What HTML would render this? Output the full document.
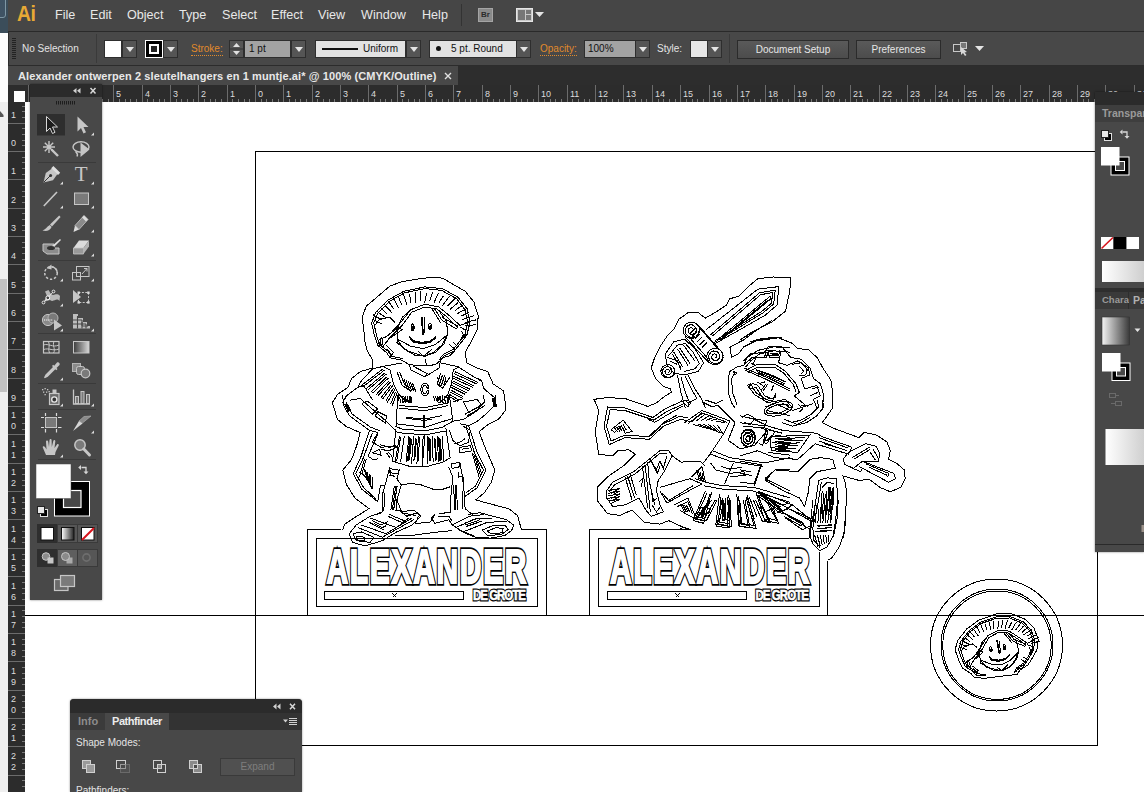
<!DOCTYPE html><html><head><meta charset="utf-8"><title>Illustrator</title><style>*{box-sizing:border-box;margin:0;padding:0}
html,body{width:1144px;height:792px;overflow:hidden;background:#fff;font-family:"Liberation Sans","DejaVu Sans",sans-serif;font-size:11px;color:#e6e6e6}
.abs{position:absolute}
#leftstrip{left:0;top:0;width:8px;height:792px;background:#efefef}
#leftstrip .blue{left:0;top:0;width:8px;height:33px;background:#3b4d5a}
#leftstrip .wht{left:0;top:33px;width:8px;height:69px;background:#fdfdfd}
#menubar{left:8px;top:0;width:1136px;height:31px;background:#464646}
#menubar span{position:absolute;top:8px;font-size:12.6px;color:#e8e8e8;line-height:15px;white-space:nowrap}
#ctrl{left:8px;top:31px;width:1136px;height:35px;background:#484848;border-top:1px solid #2a2a2a;border-bottom:1px solid #2c2c2c;border-left:1px solid #2c2c2c}
#tabbar{left:8px;top:66px;width:1136px;height:19px;background:#2d2d2d}
#tab{left:8px;top:66px;width:450px;height:20px;background:#484848}
#tab b{position:absolute;left:10px;top:4px;font-size:11px;color:#e8e8e8;white-space:nowrap;letter-spacing:0.1px}
#hruler{left:8px;top:85px;width:1136px;height:17px;background:#2c2c2c}
#vruler{left:8px;top:85px;width:17px;height:707px;background:#2c2c2c}
.lbl{color:#e4e4e4;font-size:10px;white-space:nowrap;position:absolute;line-height:13px}
.orange{color:#e08a2b;border-bottom:1px dotted #e08a2b}
.dd{position:absolute;background:#555;border:1px solid #2e2e2e;}
.dd:after{content:"";position:absolute;left:50%;top:50%;margin:-2px 0 0 -4px;border:4px solid transparent;border-top:5px solid #e4e4e4;border-bottom:0}
.btn{position:absolute;background:linear-gradient(#5a5a5a,#4c4c4c);border:1px solid #2b2b2b;color:#e6e6e6;text-align:center;font-size:10px;line-height:17px}
.panel{position:absolute;background:#484848}
.phead{position:absolute;background:#2b2b2b}
</style></head><body><svg class="abs" style="left:0;top:0" width="1144" height="792" viewBox="0 0 1144 792">
<g fill="none" stroke="#000" stroke-width="1" shape-rendering="crispEdges">
<rect x="255.500" y="151.500" width="842" height="594"/>
<path d="M25 615.500H1144"/>
<path d="M307.5 615.5V529.5H341 M521.5 529.5H546.5V615.5 M316.5 538.5H537.5V606.5H316.5Z M324.5 591.5H463.5V599.5H324.5Z M392.5 593.5L396.5 597.5M396.5 593.5L392.5 597.5"/><path d="M589.5 615.5V529.5H691 M827.5 560.5V615.5 M808.5 538.5H598.5V606.5H819.5V551.5 M607.5 591.5H746.5V599.5H607.5Z M675.5 593.5L679.5 597.5M679.5 593.5L675.5 597.5"/>
<path d="M431.9 277.2 L417.9 279.0 L402.2 281.6 L389.9 286.0 L377.7 296.5 L366.3 306.1 L362.0 317.4 L363.7 327.9 L364.6 340.2 L367.2 350.7 L372.4 359.4 L372.4 368.1 L360.2 371.6 L351.5 378.6 L348.0 387.4 L337.5 394.4 L332.2 402.9 L332.2 402.0 L337.5 419.5 L346.2 426.5 L360.2 432.6 L356.7 445.7 L351.5 459.7 L342.7 470.2 L346.2 484.2 L355.0 498.1 L369.0 508.6 L355.0 517.4 L344.5 524.4 L342.7 529.6 M431.9 277.2 L442.4 278.1 L452.9 284.2 L465.1 291.2 L473.8 301.7 L478.2 315.7 L477.3 329.7 L472.1 340.2 L465.1 352.4 L466.9 362.9 L477.3 368.1 L487.8 371.6 L493.1 383.9 L503.6 390.9 L505.3 402.9 L505.3 410.7 L498.3 419.5 L487.8 424.7 L479.1 431.7 L484.3 445.7 L489.6 457.9 L494.8 470.2 L491.3 482.4 L484.3 492.9 L475.6 499.9 L494.8 505.1 L508.8 508.6 L517.6 515.6 L521.4 529.6 M402.2 360.3 L389.9 357.7 L386.4 352.4 L377.7 345.4 L374.2 334.9 L371.6 322.7 L375.9 312.2 L388.2 300.0 L403.9 291.2 L424.9 286.9 L442.4 288.6 L458.1 297.3 L466.9 308.7 L470.0 322.7 L466.9 334.9 L461.6 341.9 L454.6 350.7 L444.1 355.9 L440.6 360.3 M403.0 358.7 L391.3 356.2 L388.0 351.2 L379.7 344.6 L376.3 334.5 L373.8 322.8 L378.0 312.8 L389.7 301.1 L404.7 292.8 L424.7 288.6 L441.4 290.3 L456.5 298.6 L464.8 309.5 L467.8 322.8 L464.8 334.5 L459.8 341.2 L453.1 349.6 L443.1 354.6 L439.8 358.7 M379.4 347.2 L378.6 340.2 L389.1 334.9 L400.4 322.7 L410.9 309.6 L424.9 304.3 L438.9 307.0 L449.4 315.7 L459.9 325.3 L468.6 322.7 M381.2 348.9 L389.9 337.6 L402.2 325.3 L411.8 312.2 L424.9 307.0 L437.1 309.1 L447.6 317.4 L458.1 327.9 M374.2 326.2 L379.4 319.2 L389.9 317.4 L395.2 322.7 M410.9 309.6 L402.2 317.4 L396.9 329.7 L397.8 340.2 L403.9 348.9 L414.4 355.0 L424.9 356.3 L435.4 352.4 L444.1 343.7 L448.0 333.2 L446.2 320.9 L438.9 310.8 M399.5 340.2 L410.9 346.3 L423.1 348.6 L435.4 344.5 L445.0 336.7 M396.9 342.8 L399.0 339.3 L396.9 342.8 L407.4 350.7 L419.7 355.0 L424.9 355.9 L433.6 352.4 L442.4 344.5 L447.1 334.9 L444.5 337.0 M409.2 335.8 L412.7 340.5 L421.4 342.3 L430.1 341.2 L435.7 336.7 M409.2 336.5 L412.7 341.2 L421.4 343.0 L430.1 341.9 L435.7 337.4 M409.2 337.2 L412.7 341.9 L421.4 343.7 L430.1 342.6 L435.7 338.1 M421.6 316.6 L422.4 334.9 M422.4 316.6 L423.3 334.9 M424.2 317.4 L424.7 333.5 M414.2 327.4 L414.0 329.2 L413.4 330.4 L412.7 330.9 L411.9 330.4 L411.3 329.2 L411.1 327.4 L411.3 325.7 L411.9 324.4 L412.7 323.9 L413.4 324.4 L414.0 325.7 L414.2 327.4 M413.5 328.3 L413.4 329.1 L413.2 329.6 L412.8 329.9 L412.5 329.6 L412.2 329.1 L412.1 328.3 L412.2 327.5 L412.5 326.9 L412.8 326.7 L413.2 326.9 L413.4 327.5 L413.5 328.3 M431.7 326.5 L431.5 328.3 L430.9 329.6 L430.1 330.0 L429.4 329.6 L428.8 328.3 L428.6 326.5 L428.8 324.8 L429.4 323.5 L430.1 323.0 L430.9 323.5 L431.5 324.8 L431.7 326.5 M431.0 327.4 L430.9 328.2 L430.7 328.8 L430.3 329.0 L430.0 328.8 L429.7 328.2 L429.6 327.4 L429.7 326.6 L430.0 326.0 L430.3 325.8 L430.7 326.0 L430.9 326.6 L431.0 327.4 M417.9 351.0 L423.5 356.3 L432.2 348.9 M402.2 360.3 L409.2 364.7 L423.1 366.0 L435.4 364.7 L440.6 360.3 M424.9 358.5 L426.6 365.5 M409.2 364.7 L410.9 369.9 L424.9 376.9 L427.0 373.4 L412.7 366.0 M424.9 376.9 L438.9 368.1 L440.6 360.3 M459.9 327.1 L465.5 330.0 L465.1 336.7 L459.9 340.5 M461.6 330.6 L463.4 334.9 L461.3 338.4 M382.9 341.4 L382.7 343.1 L382.2 344.4 L381.5 344.9 L380.8 344.4 L380.3 343.1 L380.1 341.4 L380.3 339.7 L380.8 338.4 L381.5 337.9 L382.2 338.4 L382.7 339.7 L382.9 341.4 M454.6 350.7 L449.4 355.9 L442.4 357.7 L438.9 360.3 M452.9 341.9 L458.1 347.2 M449.4 344.5 L455.5 349.8 M386.4 345.4 L393.4 352.4 L389.9 357.7 M387.3 348.9 L391.7 355.0 M382.1 323.9 L372.5 319.4 M382.2 320.1 L372.8 314.6 M386.1 317.8 L375.9 310.7 M387.3 314.2 L381.2 308.1 M391.7 312.5 L383.5 303.6 M393.9 309.1 L387.9 300.6 M398.7 308.1 L394.0 299.5 M401.8 305.1 L398.0 295.7 M406.8 304.9 L403.5 293.9 M410.6 302.5 L409.7 294.3 M415.6 303.1 L415.0 291.7 M420.0 301.3 L420.9 291.3 M424.7 302.6 L426.7 293.1 M429.5 301.5 L432.7 291.9 M433.7 303.5 L438.5 292.9 M438.7 303.2 L443.3 296.0 M442.3 305.9 L449.6 296.2 M447.3 306.3 L454.7 298.6 M450.0 309.4 L458.0 302.7 M454.8 310.7 L463.8 304.4 M456.6 314.1 L467.7 307.9 M460.9 316.1 L469.3 312.5 M461.7 319.7 L474.1 315.6 M465.4 322.3 L476.4 319.8 M465.1 326.0 L476.0 324.6 M384.7 337.6 L398.7 327.1 L402.2 329.7 L388.2 339.3 M442.4 317.4 L458.1 326.2 L456.4 328.8 L442.4 320.6 M431.9 308.7 L440.6 322.7 M434.5 308.7 L442.4 320.9 M402.2 362.9 L382.9 366.4 L372.4 369.0 L361.1 381.3 L357.6 387.4 L346.2 396.1 L342.7 402.9 M440.6 362.9 L458.1 366.7 L473.8 376.9 L481.7 380.4 L483.5 388.3 L494.8 397.9 L495.3 402.9 M382.9 366.4 L389.9 369.9 L393.4 383.9 L398.7 394.4 L397.8 402.9 M458.1 367.3 L453.2 370.2 L451.5 383.9 L448.0 394.4 L448.5 402.9 M361.1 385.6 L382.9 369.0 M362.8 386.9 L384.3 370.2 M366.0 388.8 L385.0 372.9 M367.7 390.0 L386.4 374.1 M370.9 391.9 L387.1 376.7 M372.6 393.1 L388.5 377.9 M375.8 395.1 L389.2 380.6 M377.5 396.3 L390.6 381.8 M380.7 398.2 L391.3 384.4 M382.4 399.4 L392.7 385.6 M385.6 401.4 L393.4 388.3 M387.3 402.6 L394.8 389.5 M390.5 404.5 L395.5 392.1 M392.2 405.7 L396.9 393.3 M454.6 371.6 L478.2 382.5 M453.7 373.4 L477.0 384.1 M453.6 376.2 L474.4 386.0 M452.7 377.9 L473.1 387.6 M452.5 380.7 L470.5 389.5 M451.6 382.5 L469.3 391.0 M451.5 385.3 L466.7 393.0 M450.6 387.0 L465.5 394.5 M450.4 389.8 L462.8 396.5 M449.5 391.6 L461.6 398.0 M449.4 394.4 L459.0 400.0 M448.5 396.1 L457.8 401.5 M357.6 387.4 L363.7 385.6 L372.4 399.6 M481.7 381.3 L477.3 378.6 M396.9 371.6 L402.2 385.6 L410.9 391.2 L415.3 387.4 M399.5 371.6 L404.3 383.9 L410.9 388.3 M440.6 373.4 L437.1 383.9 L442.4 388.3 L450.2 376.9 M403.9 378.6 L407.4 390.0 M437.5 376.9 L440.6 387.4 M406.0 379.7 L409.5 390.3 M439.2 376.4 L442.0 386.3 M408.1 380.7 L411.6 390.7 M441.0 375.8 L443.4 385.3 M410.2 381.8 L413.7 391.0 M442.7 375.3 L444.8 384.2 M412.3 382.8 L415.8 391.4 M444.5 374.8 L446.2 383.2 M429.1 389.5 L428.5 392.6 L427.0 394.9 L424.9 395.8 L422.8 394.9 L421.3 392.6 L420.7 389.5 L421.3 386.3 L422.8 384.0 L424.9 383.2 L427.0 384.0 L428.5 386.3 L429.1 389.5 M427.3 389.5 L427.0 391.6 L426.1 393.1 L424.9 393.7 L423.7 393.1 L422.8 391.6 L422.4 389.5 L422.8 387.4 L423.7 385.8 L424.9 385.3 L426.1 385.8 L427.0 387.4 L427.3 389.5 M398.7 394.4 L403.9 399.6 L410.9 402.9 M448.0 394.4 L442.4 400.5 L438.9 402.9 M399.5 397.0 L400.8 402.9 M437.1 397.0 L438.2 402.9 M402.2 397.0 L403.4 402.9 M439.6 397.0 L440.6 402.9 M404.8 397.0 L406.0 402.9 M442.0 397.0 L443.1 402.9 M407.4 397.0 L408.6 402.9 M444.5 397.0 L445.5 402.9 M410.0 397.0 L411.3 402.9 M446.9 397.0 L448.0 402.9 M397.8 395.0 L396.0 426.5 L402.2 429.1 L424.9 430.8 L442.4 427.3 L452.9 421.2 L449.4 395.0 M398.7 408.1 L424.9 410.7 L448.5 405.5 M399.0 405.5 L424.9 407.6 L448.8 402.9 M396.6 423.8 L424.9 427.3 L452.0 418.6 M402.2 396.7 L402.2 402.9 M442.4 395.0 L442.4 402.0 M402.2 395.9 L402.9 402.0 M433.6 395.9 L434.5 401.1 M403.9 395.9 L404.6 402.0 M435.7 395.9 L436.6 401.1 M405.7 395.9 L406.4 402.0 M437.8 395.9 L438.7 401.1 M407.4 395.9 L408.1 402.0 M439.9 395.9 L440.8 401.1 M409.2 395.9 L409.9 402.0 M442.0 395.9 L442.9 401.1 M410.9 395.9 L411.6 402.0 M444.1 395.9 L445.0 401.1 M406.5 417.4 L424.9 419.1 L442.4 415.6 M406.5 418.4 L424.9 420.5 L431.9 419.1 M423.7 415.1 L423.7 426.5 M424.9 415.1 L424.9 426.5 M396.0 429.1 L392.6 461.4 L410.9 466.7 L424.9 467.0 L442.4 462.3 L450.2 457.9 L445.9 428.2 M396.9 432.6 L424.9 434.9 L446.7 430.8 M424.9 434.9 L422.3 467.0 M399.5 436.1 L395.2 462.3 M400.6 437.0 L396.6 461.4 M404.3 436.1 L400.6 462.3 M409.0 436.1 L406.0 462.3 M410.0 437.0 L407.4 461.4 M410.9 437.8 L408.5 460.6 M411.8 438.7 L409.3 459.7 M413.7 436.1 L411.4 464.1 M415.6 437.8 L413.9 460.6 M416.5 438.7 L414.8 459.7 M418.4 436.1 L416.9 464.1 M419.5 437.0 L418.3 461.4 M423.1 436.1 L422.3 464.1 M427.9 436.1 L427.7 464.1 M428.9 437.0 L429.1 461.4 M429.8 437.8 L430.1 460.6 M430.7 438.7 L431.0 459.7 M432.6 436.1 L433.1 462.3 M434.5 437.8 L435.6 460.6 M435.4 438.7 L436.4 459.7 M437.3 436.1 L438.5 462.3 M438.4 437.0 L439.9 461.4 M439.2 437.8 L441.0 460.6 M440.1 438.7 L441.9 459.7 M442.0 436.1 L444.0 462.3 M342.7 395.0 L343.6 405.5 L349.7 416.0 L369.0 430.0 L377.7 432.6 L372.4 442.2 L381.2 447.4 L395.2 445.7 M349.7 400.2 L360.2 398.5 L388.2 423.0 L396.9 431.7 M346.2 402.0 L352.3 414.2 L370.7 427.3 L380.3 430.8 M362.0 403.7 L372.4 414.2 L377.7 409.0 L367.2 401.1 L362.0 403.7 M375.1 416.0 L385.6 423.0 L386.4 416.0 L377.7 411.6 L375.1 416.0 M344.5 403.7 L348.0 411.6 M345.5 403.7 L349.0 411.6 M346.6 403.7 L350.1 411.6 M347.6 403.7 L351.1 411.6 M380.3 444.8 L389.9 447.4 L395.2 445.7 L396.9 447.4 L388.2 450.9 L381.2 449.2 M372.4 452.7 L379.4 449.2 L381.2 455.3 L372.4 452.7 M386.4 452.7 L389.9 457.9 M388.2 451.8 L392.0 456.5 M495.3 395.0 L494.8 405.5 L487.8 412.5 L477.3 421.2 L468.6 425.6 L459.9 423.8 M483.5 395.0 L484.3 402.0 L477.3 410.7 L463.4 419.5 L452.9 421.2 M463.4 402.0 L477.3 399.4 L481.7 405.5 L468.6 412.5 L463.4 402.0 M452.9 402.0 L463.4 398.5 M465.1 414.2 L483.5 403.7 M466.9 416.0 L485.2 405.5 M492.2 397.6 L494.0 407.2 M493.1 397.6 L494.8 407.2 M494.0 397.6 L495.7 407.2 M494.8 397.6 L496.6 407.2 M449.4 430.0 L452.9 440.5 L459.9 445.7 L468.6 442.2 L470.3 430.0 L463.4 426.5 M454.6 444.0 L459.9 442.2 L465.1 438.7 L463.4 439.6 M459.9 447.4 L470.3 445.7 L472.1 450.9 L459.9 452.7 L459.9 447.4 M461.6 449.2 L468.6 448.3 M369.8 430.0 L361.1 456.2 L353.2 473.7 L362.0 489.4 L377.7 501.6 L380.3 485.9 L384.7 485.9 M372.4 432.6 L363.7 457.1 L355.8 473.7 L363.7 487.7 L375.9 499.0 M377.7 434.3 L368.1 456.2 L373.3 459.7 L377.7 458.8 M359.3 471.9 L366.9 477.2 L363.7 468.4 M361.1 473.0 L367.9 479.6 L365.5 470.2 M362.8 474.0 L369.0 482.1 L367.2 471.9 M364.6 475.1 L370.0 484.5 L369.0 473.7 M366.3 476.1 L371.0 487.0 L370.7 475.4 M368.1 477.2 L372.1 489.4 L372.4 477.2 M364.6 458.8 L359.3 477.2 M366.3 458.8 L362.0 473.7 M468.6 425.6 L477.3 452.7 L486.1 470.2 L477.3 487.7 L465.1 496.4 M466.0 426.5 L474.7 453.6 L483.5 470.2 L475.6 485.9 L466.0 492.9 M472.1 452.7 L479.1 477.2 M473.8 454.4 L480.8 476.3 M475.6 456.2 L481.7 473.7 M401.3 485.0 L410.9 483.3 L421.4 485.0 L433.6 489.4 L442.4 489.4 L450.2 486.8 M389.9 466.7 L387.3 477.2 L382.9 492.9 L382.1 512.1 L372.4 515.6 M399.5 469.3 L396.9 478.9 L401.3 485.0 L396.9 499.9 L396.0 510.4 L403.9 511.3 L414.4 510.4 L419.7 515.6 M389.1 468.4 L398.7 470.2 L397.8 473.7 L389.9 472.8 L389.1 468.4 M390.8 470.2 L389.9 475.4 L395.2 476.3 M384.7 492.9 L383.8 511.3 M394.3 485.9 L390.8 510.4 M395.7 485.9 L392.2 510.4 M397.1 485.9 L393.6 510.4 M396.9 499.9 L402.2 513.0 L416.2 515.6 M448.5 466.7 L452.9 477.2 L451.1 492.9 L450.2 512.1 L438.9 513.9 M459.9 462.3 L462.5 477.2 L464.2 492.9 L465.1 508.6 L473.8 515.6 M451.1 464.1 L459.0 462.3 L459.9 466.7 L452.0 468.4 L451.1 464.1 M458.1 471.9 L458.1 477.2 L461.6 476.3 M453.7 485.0 L454.6 510.4 M455.1 485.0 L456.0 510.4 M456.5 485.0 L457.4 510.4 M463.4 477.2 L462.5 508.6 M382.4 512.7 L370.2 516.2 L356.2 525.0 L349.2 533.7 L352.7 542.4 L365.0 545.9 L382.4 540.7 L396.4 532.0 L412.2 525.0 L420.9 516.2 L417.4 512.7 L406.9 516.2 L399.9 511.0 M358.0 527.6 L382.4 537.2 L413.9 519.7 M361.5 525.0 L385.9 533.7 L412.2 518.0 M370.2 518.0 L396.4 527.6 L408.7 518.0 M352.7 533.7 L361.5 532.0 L373.7 537.2 L370.2 542.4 L356.2 540.7 L352.7 533.7 M356.2 536.3 L365.0 537.2 L364.1 540.7 L356.2 539.8 L356.2 536.3 M372.0 520.6 L380.7 525.0 L387.7 521.5 M373.7 523.2 L382.4 527.6 L385.9 525.8 M369.3 522.3 L378.1 527.1 L384.2 529.9 M387.7 516.2 L403.4 523.2 M389.4 514.5 L405.2 521.1 M434.9 514.5 L431.4 518.0 L434.9 523.2 L448.9 519.7 L452.4 525.0 L462.9 532.0 L475.1 537.2 L490.8 538.1 L504.8 535.5 L511.8 530.2 L513.6 525.0 L506.6 519.7 L492.6 516.2 L480.3 512.7 L468.1 514.5 M452.4 525.0 L469.9 516.2 L483.8 514.5 M455.9 527.6 L475.1 518.8 L492.6 518.0 M462.9 532.0 L487.3 522.3 L506.6 521.5 M482.1 530.2 L494.3 525.0 L504.8 525.0 L508.3 529.3 L501.3 534.6 L487.3 535.5 L482.1 530.2 M487.3 531.1 L496.1 527.6 L503.1 528.5 L502.2 532.8 L490.8 533.7 L487.3 531.1 M464.6 523.2 L478.6 518.0 M465.5 525.0 L480.3 519.7 M466.4 526.4 L482.1 521.1 M438.4 516.2 L448.9 516.2 L452.4 521.5 M457.6 529.3 L473.4 535.8 M394.7 535.1 L413.9 535.1 L434.9 532.3 L452.4 530.6 M418.3 516.2 L415.7 523.2 L429.7 522.7 L434.9 514.8"/>
<path d="M687.9 529.4 L668.7 520.6 L659.9 524.1 L644.2 522.4 L632.0 510.1 L619.7 515.4 L607.5 513.6 L597.9 501.4 L597.0 487.4 L607.5 476.9 L625.0 464.7 L635.5 454.2 L628.5 449.8 L618.0 450.7 L612.7 455.9 L598.7 454.2 L595.2 431.5 L598.7 410.5 L594.4 400.0 L593.5 399.4 L607.5 397.6 L625.0 398.5 L647.7 406.4 L656.4 402.9 L665.2 395.9 L671.3 392.4 L670.4 388.9 L663.4 386.3 L655.6 378.4 L651.2 367.9 L654.7 357.4 L659.9 346.9 L666.9 336.4 L673.9 329.4 L679.2 319.0 L687.9 312.8 L698.4 312.8 L705.4 318.1 L715.9 312.0 L726.4 305.0 L729.9 298.8 L738.6 296.2 L747.3 287.5 L757.8 278.7 L773.6 277.0 L790.7 277.3 L789.8 291.0 L785.5 311.1 L771.5 322.4 L750.5 332.9 L740.0 339.9 L771.8 320.7 L757.8 329.4 L743.8 339.9 L729.9 346.9 L731.6 357.4 L738.6 353.9 L743.8 346.9 L757.8 339.9 L771.8 337.3 L782.3 337.3 L750.5 341.7 L762.7 338.2 L778.5 337.8 L792.4 343.4 L797.7 348.7 L808.2 349.5 L816.9 357.4 L823.9 369.7 L830.9 380.1 L832.7 392.4 L832.7 407.9 L830.9 410.5 L822.2 422.7 L832.7 428.0 L858.9 437.6 L864.1 432.3 L876.4 435.0 L886.9 442.0 L890.3 450.7 L888.6 459.4 L897.3 463.8 L904.3 469.9 L905.2 478.7 L900.8 487.4 L890.3 491.8 L879.9 487.4 L869.4 479.5 L858.9 480.4 L843.1 476.0 L845.8 483.9 L846.6 497.9 L844.9 522.4 L843.5 537.9 L846.1 517.5 L843.5 535.0 L839.1 547.2 L832.1 557.7 L827.7 560.3 M765.3 480.4 L775.0 469.9 L797.7 471.7 L809.9 459.4 L820.4 457.7 L832.7 459.4 L835.3 468.2 L816.9 471.7 L809.9 478.7 L808.2 492.7 L804.7 506.6 L799.4 497.9 L783.7 490.9 L765.3 480.4 M705.4 330.3 L757.8 289.2 L778.8 286.6 L777.1 305.0 L764.8 315.5 L712.4 345.2 M710.6 334.7 L759.6 292.7 L775.3 290.1 L773.6 304.1 L763.1 312.8 L714.1 342.6 M712.4 336.1 L760.5 294.8 L772.7 292.4 L771.5 303.2 L762.2 311.1 L715.0 340.8 M719.4 338.2 L770.1 296.2 L770.9 298.8 L721.1 339.9 L719.4 338.2 M722.9 337.3 L768.3 299.7 M699.3 330.3 L698.1 333.9 L695.5 336.5 L692.0 337.4 L688.7 336.7 L686.2 334.5 L685.1 331.5 L685.5 328.4 L687.3 326.0 L689.9 324.8 L692.6 325.0 L694.8 326.4 L696.1 328.6 L696.1 331.0 L695.1 333.0 L693.3 334.2 L691.2 334.4 L689.4 333.6 L688.3 332.1 L688.1 330.5 L688.6 329.0 L689.7 328.0 L691.0 327.7 L692.2 328.1 L693.0 328.9 L693.2 329.9 L693.0 330.8 L692.4 331.3 L691.8 331.4 M699.6 330.3 L699.0 333.5 L697.2 336.1 L694.5 337.9 L691.4 338.5 L688.3 337.9 L685.6 336.1 L683.8 333.5 L683.2 330.3 L683.8 327.2 L685.6 324.5 L688.3 322.7 L691.4 322.1 L694.5 322.7 L697.2 324.5 L699.0 327.2 L699.6 330.3 M722.9 356.5 L721.7 360.2 L719.1 362.7 L715.6 363.7 L712.3 362.9 L709.8 360.7 L708.7 357.7 L709.1 354.6 L710.9 352.2 L713.5 351.0 L716.2 351.2 L718.4 352.6 L719.7 354.8 L719.7 357.2 L718.7 359.2 L716.9 360.4 L714.8 360.6 L713.0 359.8 L711.9 358.4 L711.7 356.7 L712.2 355.2 L713.3 354.2 L714.6 353.9 L715.8 354.3 L716.6 355.1 L716.8 356.1 L716.6 357.0 L716.0 357.5 L715.4 357.7 M723.2 356.5 L722.6 359.7 L720.8 362.3 L718.1 364.1 L715.0 364.8 L711.9 364.1 L709.2 362.3 L707.4 359.7 L706.8 356.5 L707.4 353.4 L709.2 350.7 L711.9 348.9 L715.0 348.3 L718.1 348.9 L720.8 350.7 L722.6 353.4 L723.2 356.5 M697.5 324.2 L721.1 351.3 M685.3 337.3 L708.9 362.7 M694.9 328.6 L689.7 333.8 M697.3 331.4 L692.1 336.6 M699.8 334.2 L694.5 339.4 M702.2 337.0 L697.0 342.2 M704.7 339.8 L699.4 345.0 M707.1 342.6 L701.9 347.8 M699.3 327.7 L718.5 349.5 M687.9 335.6 L707.5 358.3 M665.2 353.9 L673.9 341.7 L684.4 339.1 L694.9 348.7 L703.6 362.7 L698.4 371.4 L684.4 374.9 L673.9 373.1 L666.9 364.4 L665.2 353.9 M668.7 355.7 L677.4 345.2 L685.3 343.4 L693.1 352.2 L699.3 363.5 L694.9 368.8 L684.4 371.4 M672.2 353.9 L680.9 367.9 M677.4 348.7 L687.9 365.3 M683.5 345.2 L694.9 360.9 M673.9 352.2 L682.7 367.0 M679.5 347.8 L690.0 363.5 M666.9 357.4 L677.4 360.9 L680.9 369.7 M669.5 360.9 L677.4 364.4 M674.4 371.4 L673.5 374.5 L671.2 376.6 L668.3 377.4 L665.5 376.8 L663.4 374.9 L662.5 372.4 L662.8 369.8 L664.3 367.8 L666.5 366.7 L668.8 366.9 L670.7 368.1 L671.8 369.9 L671.8 371.9 L670.9 373.6 L669.4 374.7 L667.6 374.8 L666.1 374.2 L665.2 372.9 L665.0 371.5 L665.4 370.3 L666.4 369.5 L667.5 369.2 L668.5 369.5 L669.2 370.2 L669.4 371.0 L669.1 371.8 L668.7 372.2 L668.1 372.3 M674.8 371.4 L674.1 374.3 L672.2 376.6 L669.4 377.9 L666.2 377.9 L663.4 376.6 L661.5 374.3 L660.8 371.4 L661.5 368.5 L663.4 366.2 L666.2 364.9 L669.4 364.9 L672.2 366.2 L674.1 368.5 L674.8 371.4 M677.4 374.9 L680.9 392.4 L685.3 407.9 M687.9 374.9 L694.9 388.9 L701.9 399.4 L705.4 407.9 M680.9 376.6 L685.3 392.4 L689.7 402.9 M685.3 376.6 L691.4 388.9 L697.0 398.5 M687.9 402.9 L694.9 399.4 L697.0 398.5 M735.1 407.9 L731.6 402.9 L728.1 392.4 L728.1 378.4 L729.9 371.4 L736.9 367.0 L743.8 365.3 L747.3 357.4 L757.8 350.4 L773.6 346.9 L790.0 347.8 M736.9 404.6 L732.5 392.4 L731.6 378.4 L735.1 372.3 M745.6 367.0 L750.8 360.9 L759.6 353.9 L773.6 350.8 L790.0 352.2 M752.6 365.3 L756.1 357.4 L766.6 357.4 L768.3 352.2 M750.8 362.7 L755.2 365.3 M764.8 355.7 L778.8 355.7 L779.7 350.4 M770.1 353.0 L777.9 353.6 M743.8 367.9 L764.8 376.6 L790.0 388.9 M744.7 370.0 L764.8 378.7 L790.0 391.0 M756.1 369.7 L773.6 375.8 L785.8 381.9 M748.2 387.1 L752.6 383.6 L757.8 385.4 L764.8 395.9 L773.6 399.4 L775.3 394.1 M750.0 388.9 L756.1 387.5 L763.1 398.5 L772.7 401.5 M759.6 383.6 L764.8 381.9 M763.1 390.6 L768.3 383.6 M771.8 390.6 L773.6 385.4 M733.4 371.4 L736.9 373.1 L735.1 374.9 L733.4 371.4 M743.5 360.9 L750.5 353.9 L764.5 352.2 L768.0 346.9 L782.0 346.9 L790.7 357.4 L801.2 359.2 L809.9 367.9 L813.4 378.4 L820.4 383.6 L823.9 395.9 L822.2 407.9 M743.5 365.3 L752.2 357.4 L764.5 357.4 L766.2 350.4 L781.1 351.3 L778.5 362.7 L787.2 365.3 L797.7 360.9 L808.2 367.9 L809.9 374.9 L801.2 378.4 L804.7 388.9 L816.9 385.4 L820.4 395.9 L813.4 399.4 L816.9 407.9 M745.2 370.5 L757.5 364.4 L775.0 364.4 L785.5 371.4 L795.9 383.6 L799.4 392.4 L794.2 395.9 L804.7 404.6 M747.9 372.3 L757.5 367.0 L774.1 367.0 L783.7 373.1 L793.3 384.5 L795.9 391.5 M755.7 369.7 L785.5 381.9 M756.6 371.4 L784.6 383.6 M757.5 373.1 L783.7 385.0 M747.0 385.4 L750.5 383.6 L755.7 392.4 L766.2 399.4 L775.0 397.6 L775.8 393.3 M748.7 387.1 L754.9 395.0 L766.2 401.5 L774.1 399.7 M757.5 381.9 L762.7 385.4 M766.2 383.6 L761.0 390.6 M773.2 385.4 L771.5 390.6 M768.0 352.2 L769.7 357.4 L779.3 357.4 M769.7 353.9 L777.6 354.3 M770.6 355.7 L778.5 356.0 M792.4 364.4 L801.2 362.7 L807.3 369.7 L805.6 374.9 L799.4 375.8 M799.4 366.2 L803.8 371.4 L801.2 374.0 M811.7 388.9 L818.7 387.1 M809.9 395.9 L817.8 392.4 M766.2 402.9 L785.5 399.4 L792.4 407.9 M782.0 402.9 L790.7 407.9 M822.2 400.0 L823.9 407.0 L816.9 415.7 L806.4 422.7 L792.4 426.2 L782.0 422.7 M816.9 400.0 L818.7 407.0 L811.7 414.0 L801.2 420.1 L790.7 422.7 M792.9 405.1 L792.4 407.8 L789.8 410.7 L785.5 413.3 L780.1 415.2 L774.5 416.1 L769.4 415.9 L765.8 414.6 L764.1 412.4 L764.5 409.7 L767.1 406.8 L771.4 404.2 L776.8 402.3 L782.5 401.4 L787.5 401.6 L791.1 402.9 L792.9 405.1 M788.6 406.3 L788.0 408.3 L785.3 410.5 L781.0 412.4 L776.1 413.7 L771.5 414.0 L768.1 413.4 L766.6 411.9 L767.2 409.9 L769.9 407.7 L774.1 405.8 L779.0 404.5 L783.6 404.2 L787.1 404.8 L788.6 406.3 M797.7 403.5 L802.9 408.7 L799.4 412.2 M801.2 405.2 L808.2 406.1 M792.4 410.5 L813.4 403.5 M783.7 419.2 L797.7 424.5 L809.9 417.5 M740.0 415.7 L754.0 419.2 L768.0 426.2 L783.7 430.6 L816.9 433.2 L822.2 436.7 L851.9 447.2 L848.4 454.2 L815.2 443.7 L797.7 459.4 L775.0 457.7 L757.5 450.7 L740.0 455.9 M769.7 436.7 L809.9 435.0 L797.7 452.4 L771.5 450.7 L769.7 436.7 M775.0 438.8 L804.7 437.6 M777.6 440.0 L792.4 439.5 M775.0 441.4 L802.6 440.2 M777.6 442.7 L791.0 442.1 M775.0 444.1 L800.5 442.8 M777.6 445.3 L789.7 444.8 M775.0 446.7 L798.4 445.5 M777.6 447.9 L788.3 447.4 M775.0 449.3 L796.3 448.1 M777.6 450.5 L786.9 450.0 M818.7 437.6 L848.4 448.1 M819.5 441.1 L846.6 450.7 M823.9 443.7 L844.9 449.8 M754.9 438.5 L754.2 442.1 L752.2 445.0 L749.4 446.6 L746.3 446.6 L743.5 445.0 L741.6 442.1 L740.9 438.5 L741.6 434.8 L743.5 431.9 L746.3 430.3 L749.4 430.3 L752.2 431.9 L754.2 434.8 L754.9 438.5 M752.4 438.8 L751.8 441.6 L750.1 443.7 L747.9 444.4 L745.6 443.7 L743.9 441.6 L743.3 438.8 L743.9 436.0 L745.6 434.0 L747.9 433.2 L750.1 434.0 L751.8 436.0 L752.4 438.8 M750.0 439.2 L749.6 440.8 L748.5 441.8 L747.2 441.8 L746.2 440.8 L745.8 439.2 L746.2 437.5 L747.2 436.5 L748.5 436.5 L749.6 437.5 L750.0 439.2 M761.0 428.0 L766.2 429.7 L762.7 445.5 L759.2 443.7 M768.0 431.5 L764.5 442.0 M740.0 461.2 L761.0 464.7 L754.0 483.9 L740.0 482.2 M740.0 469.9 L750.5 471.7 M740.0 473.4 L752.2 475.5 M740.0 422.7 L750.5 424.5 L754.0 419.2 M743.5 426.2 L764.5 428.0 M843.1 459.4 L848.4 452.4 L865.9 443.7 L876.4 446.3 L879.9 454.2 L878.1 461.2 L862.4 461.2 L853.6 468.2 L844.9 464.7 L843.1 459.4 M851.9 457.7 L869.4 447.2 M853.6 459.4 L870.2 449.3 M872.9 449.0 L878.1 457.7 M870.2 452.4 L875.5 460.3 M862.4 461.2 L893.8 473.4 L895.6 478.7 L888.6 482.2 L858.9 466.4 M865.9 463.8 L888.6 473.4 L887.7 476.9 M869.4 467.3 L886.9 475.2 M848.4 466.4 L860.6 471.7 L862.4 468.2 M818.7 480.4 L827.4 477.8 L836.2 478.7 L837.9 497.9 L835.3 522.4 L832.7 537.9 M818.7 480.4 L815.2 504.9 L811.7 522.4 L809.9 537.9 M821.3 482.2 L817.8 504.9 L814.3 522.4 M822.2 487.4 L827.4 482.2 L834.4 483.9 M822.2 490.9 L820.4 515.4 M823.7 492.7 L822.0 519.8 M825.3 494.4 L823.6 515.4 M826.9 490.9 L825.1 519.8 M828.5 492.7 L826.7 515.4 M830.0 494.4 L828.3 519.8 M831.6 490.9 L829.9 515.4 M833.2 492.7 L831.4 519.8 M828.3 487.4 L829.2 504.9 M829.5 487.4 L830.2 504.9 M830.7 487.4 L831.3 504.9 M832.0 487.4 L832.3 504.9 M833.2 487.4 L833.4 504.9 M816.9 525.9 L832.7 525.0 M816.9 528.5 L832.3 527.6 M815.2 531.1 L831.8 530.8 M757.5 490.9 L792.4 504.9 L811.7 520.6 M755.7 494.4 L782.0 511.9 L809.9 529.4 M761.0 495.3 L789.0 508.4 L790.7 504.9 M782.0 511.9 L792.4 504.9 M785.5 513.6 L802.9 522.4 L801.2 525.9 L783.7 516.3 M789.0 517.1 L801.2 523.3 M812.9 500.0 L810.2 526.2 L809.4 535.0 L812.9 543.7 L819.9 550.7 L826.9 547.2 L833.8 535.0 L837.3 517.5 L838.2 500.0 M815.5 500.0 L812.9 528.0 L813.7 540.2 L819.9 547.2 M816.4 505.2 L815.5 522.7 M819.0 508.7 L817.9 522.7 M821.6 505.2 L820.4 522.7 M824.2 508.7 L822.8 522.7 M826.9 505.2 L825.3 522.7 M829.5 508.7 L827.7 522.7 M832.1 505.2 L830.2 522.7 M818.1 526.2 L832.1 524.5 M818.1 528.8 L831.7 527.6 M819.0 531.5 L830.3 530.8 M814.6 535.0 L818.1 547.2 M817.4 535.0 L820.2 546.2 M820.2 535.0 L822.3 545.1 M823.0 535.0 L824.4 544.1 M825.8 535.0 L826.5 543.0 M828.6 535.0 L828.6 542.0 M777.9 512.2 L788.4 508.7 L812.9 519.2 L810.2 526.2 L802.4 529.7 L784.9 517.5 M784.9 514.0 L802.4 522.7 L805.9 528.0 M788.4 515.7 L800.6 521.9 M791.9 510.5 L811.1 521.0 M709.7 500.0 L695.7 519.2 L706.2 521.0 L717.1 500.0 M711.8 500.0 L697.8 517.1 L704.5 518.5 L715.3 500.0 M722.0 500.0 L716.7 526.2 L729.0 528.0 L730.5 500.0 M724.1 500.0 L718.8 524.1 L727.2 525.5 L728.8 500.0 M737.7 500.0 L739.4 526.2 L749.9 528.0 L745.0 500.0 M739.8 500.0 L741.5 524.1 L748.2 525.5 L743.3 500.0 M753.4 500.0 L762.2 521.0 L770.9 522.7 L759.5 500.0 M755.5 500.0 L764.3 518.9 L769.2 520.3 L757.8 500.0 M767.4 500.0 L777.9 512.2 L784.9 514.0 L772.3 500.0 M769.5 500.0 L780.0 510.1 L783.1 511.5 L770.6 500.0 M680.0 510.5 L695.7 519.2 M680.0 526.2 L690.5 529.7 L680.0 528.8 M702.7 507.0 L701.0 517.5 M703.6 507.0 L701.9 517.5 M704.5 507.0 L702.7 517.5 M705.3 507.0 L703.6 517.5 M723.7 503.5 L722.8 521.0 M724.8 503.5 L723.9 521.0 M725.8 503.5 L724.9 521.0 M687.9 400.0 L680.9 401.7 L665.2 408.7 L652.9 417.5 L625.0 407.9 L607.5 407.0 L604.0 426.2 L609.2 444.6 L625.0 437.6 L649.4 439.3 L663.4 426.2 L680.9 419.2 L691.4 421.9 M684.4 403.5 L666.9 411.4 L653.8 420.1 L625.0 410.5 L610.1 409.6 L606.6 426.2 L611.0 441.1 L625.0 435.0 L648.6 436.7 L661.7 424.5 L679.2 416.6 L687.9 417.5 M682.7 406.1 L668.7 414.0 L654.7 422.4 L647.7 419.2 M651.2 435.8 L663.4 422.7 L677.4 414.9 M611.0 429.7 L623.2 420.1 L632.0 431.5 L625.0 433.2 L621.5 426.2 L614.5 432.3 L611.0 429.7 M614.5 428.0 L618.0 432.3 M616.6 426.9 L620.1 431.8 M618.7 425.9 L622.2 431.3 M620.8 424.8 L624.3 430.8 M622.9 423.8 L626.4 430.2 M680.9 400.0 L687.9 407.0 L691.4 401.7 M685.3 400.0 L689.7 405.2 M606.6 490.9 L612.7 482.2 L633.7 471.7 L659.9 450.7 L668.7 450.7 L672.2 455.9 L665.2 469.9 L658.2 480.4 L656.4 490.9 L659.9 504.9 L663.4 511.9 L651.2 516.3 L645.9 510.1 L639.0 497.9 L625.0 504.9 L612.7 506.6 L606.6 497.9 L606.6 490.9 M609.2 491.8 L614.5 484.8 L634.6 474.3 L659.9 453.3 L666.9 453.3 M642.4 466.4 L647.7 508.4 M645.1 464.7 L650.3 511.9 M647.7 462.1 L649.4 482.2 L654.7 504.9 M625.0 476.9 L632.0 499.7 M627.6 476.0 L634.6 497.9 M630.2 474.3 L636.3 495.3 M608.4 490.9 L619.7 488.3 L611.0 493.5 M608.4 493.4 L619.7 491.1 L611.0 496.0 M608.4 495.8 L619.7 493.9 L611.0 498.4 M608.4 498.3 L619.7 496.7 L611.0 500.9 M608.4 500.7 L619.7 499.5 L611.0 503.3 M649.4 457.7 L656.4 469.9 L659.9 461.2 L663.4 468.2 L666.9 455.9 M651.2 461.2 L657.3 473.4 L659.9 466.4 M650.3 483.9 L652.9 501.4 L657.3 497.9 M652.1 504.9 L656.4 511.9 L659.9 507.5 M639.0 482.2 L642.4 478.7 L641.6 487.4 M672.2 455.9 L680.9 462.1 L700.1 461.2 L705.4 466.4 M659.9 487.4 L689.7 478.7 L701.9 483.9 M659.9 490.9 L666.9 503.1 L694.9 487.4 L701.9 483.9 M661.7 492.7 L668.7 500.5 L693.1 485.7 M691.4 476.9 L701.9 466.4 L705.4 482.2 L694.9 478.7 M696.6 469.9 L699.3 479.5 M698.4 470.8 L700.7 480.1 M700.1 471.7 L702.1 480.6 M701.9 472.6 L703.5 481.1 M684.4 422.7 L701.9 410.5 L729.9 421.0 L722.9 435.0 L712.4 450.7 L703.6 462.9 M687.9 423.6 L702.8 413.1 L727.2 422.4 M691.4 421.9 L701.9 412.2 M696.3 421.0 L705.7 414.0 M701.2 420.5 L709.6 415.7 M706.1 420.3 L713.4 417.5 M711.0 420.5 L717.3 419.2 M715.9 421.0 L721.1 421.0 M720.8 421.9 L725.0 422.7 M693.1 424.5 L712.4 429.7 M698.0 424.0 L714.5 430.6 M702.9 423.8 L716.6 431.5 M707.8 424.0 L718.7 432.3 M712.7 424.5 L720.8 433.2 M717.6 425.3 L722.9 434.1 M701.9 401.7 L712.4 407.0 L717.6 405.2 L729.9 417.5 L735.1 422.7 M705.4 400.0 L715.9 403.5 L722.9 400.0 M712.4 450.7 L729.9 457.7 L764.8 462.9 L790.0 457.7 M710.6 454.2 L729.9 461.2 L763.1 466.4 M735.1 422.7 L728.1 440.2 L740.3 449.0 L754.3 445.5 L768.3 429.7 L782.3 433.2 M755.6 437.6 L754.8 441.4 L752.8 444.4 L749.9 446.1 L746.6 446.1 L743.6 444.4 L741.6 441.4 L740.9 437.6 L741.6 433.8 L743.6 430.8 L746.6 429.1 L749.9 429.1 L752.8 430.8 L754.8 433.8 L755.6 437.6 M753.1 437.9 L752.5 440.9 L750.7 443.1 L748.2 443.9 L745.8 443.1 L744.0 440.9 L743.3 437.9 L744.0 435.0 L745.8 432.8 L748.2 432.0 L750.7 432.8 L752.5 435.0 L753.1 437.9 M750.5 438.3 L750.1 440.0 L748.9 441.1 L747.5 441.1 L746.4 440.0 L745.9 438.3 L746.4 436.5 L747.5 435.5 L748.9 435.5 L750.1 436.5 L750.5 438.3 M764.8 428.0 L775.3 431.5 L766.6 443.7 L763.1 442.0 M771.8 435.0 L766.6 441.1 M775.3 435.0 L790.0 437.6 M771.8 442.0 L790.0 445.5 M770.1 447.2 L790.0 450.7 M768.3 452.4 L790.0 455.1 M743.8 422.7 L764.8 426.2 L766.6 421.0 L747.3 417.5 M742.1 417.5 L747.3 414.0 L754.3 417.5 M764.8 407.0 L775.3 403.5 L790.0 410.5 M766.6 410.5 L790.0 415.7 M710.6 462.9 L715.9 469.9 L729.9 473.4 L743.8 471.7 L745.6 475.2 L729.9 476.9 M721.1 466.4 L729.9 469.1 L742.1 467.3 M733.4 462.9 L724.6 483.9 M761.3 464.7 L754.3 485.7 M705.4 482.2 L722.9 485.7 L754.3 487.4 L790.0 497.9 M703.6 485.7 L722.9 489.2 L752.6 490.9 L790.0 502.3 M764.8 478.7 L775.3 469.9 L790.0 469.9 M764.8 478.7 L790.0 490.9 M705.4 490.9 L693.1 520.6 L703.6 523.3 L711.7 491.8 M707.1 493.0 L695.6 518.2 L701.5 520.3 L710.3 493.5 M719.4 494.4 L715.9 524.1 L731.6 526.7 L728.8 495.3 M721.1 496.5 L718.3 521.7 L729.5 523.8 L727.4 497.0 M736.9 494.4 L738.6 525.9 L756.1 528.5 L747.3 495.3 M738.6 496.5 L741.0 523.4 L754.0 525.5 L745.9 497.0 M756.1 492.7 L764.8 520.6 L778.8 523.3 L764.5 493.5 M757.8 494.8 L767.3 518.2 L776.7 520.3 L763.1 495.3 M696.6 511.9 L708.9 513.6 L710.6 508.4 L699.3 507.0 L696.6 511.9 M722.9 497.9 L722.9 518.9 L729.9 520.6 M725.5 497.9 L725.5 517.1 M747.3 497.9 L754.3 518.9 M749.4 497.2 L757.0 517.1 M673.9 504.9 L687.9 497.9 L694.9 515.4 M677.4 506.6 L687.9 501.4 L692.3 513.6 M680.9 504.9 L684.4 511.9 M682.7 504.9 L686.2 511.9 M684.4 504.9 L687.9 511.9 M686.2 504.9 L689.7 511.9 M757.8 492.7 L782.3 504.9 L790.0 503.1 M759.6 495.3 L780.6 507.0 M764.8 511.9 L773.6 508.4 L775.3 513.6"/>
<circle cx="996.5" cy="645" r="66"/><circle cx="997" cy="645" r="56"/><circle cx="997" cy="645.2" r="54.2"/>
<path d="M985.9 675.9 L976.1 675.0 L972.9 671.3 L965.5 666.7 L961.8 658.9 L958.6 649.7 L961.0 641.1 L969.3 630.5 L980.7 622.2 L996.5 616.9 L1010.2 616.6 L1023.2 621.8 L1031.0 629.8 L1034.8 640.3 L1033.5 650.1 L1030.1 656.0 L1025.6 663.4 L1017.9 668.5 L1015.6 672.2 M986.4 674.6 L977.1 673.8 L974.0 670.2 L966.9 665.8 L963.4 658.4 L960.4 649.6 L962.6 641.4 L970.6 631.3 L981.4 623.4 L996.5 618.3 L1009.6 618.0 L1022.0 623.0 L1029.5 630.6 L1033.1 640.7 L1031.9 650.0 L1028.7 655.6 L1024.3 662.7 L1017.0 667.6 L1014.8 671.1 M967.0 667.9 L965.7 662.6 L973.3 657.5 L980.9 646.9 L987.8 635.8 L998.1 630.4 L1009.2 631.1 L1018.2 636.9 L1027.2 643.3 L1033.7 640.5 M968.5 669.1 L974.2 659.4 L982.5 648.8 L988.7 637.7 L998.4 632.4 L1008.1 632.9 L1017.0 638.4 L1026.1 645.5 M961.0 652.1 L964.4 646.2 L972.3 643.9 L976.9 647.4 M987.8 635.8 L981.8 642.7 L978.9 652.7 L980.6 660.7 L986.1 666.9 L994.8 670.7 L1003.1 670.6 L1010.8 666.6 L1016.8 659.0 L1018.8 650.5 L1016.2 641.2 L1009.6 634.1 M981.9 660.6 L991.3 664.2 L1001.0 664.8 L1010.1 660.5 L1016.8 653.5 M980.1 662.8 L981.4 659.9 L980.1 662.8 L989.0 667.9 L998.9 670.2 L1003.0 670.3 L1009.5 666.8 L1015.5 659.9 L1018.2 652.0 L1016.4 653.9 M989.0 656.3 L992.1 659.6 L999.0 660.1 L1005.7 658.5 L1009.6 654.4 M989.0 656.8 L992.2 660.1 L999.1 660.6 L1005.8 659.0 L1009.7 655.0 M989.1 657.3 L992.2 660.7 L999.2 661.2 L1005.8 659.5 L1009.7 655.5 M996.7 640.2 L999.2 654.3 M997.4 640.1 L999.8 654.2 M998.9 640.6 L1000.8 653.0 M992.1 649.3 L992.1 650.7 L991.8 651.7 L991.2 652.1 L990.5 651.9 L990.0 650.9 L989.6 649.6 L989.6 648.2 L990.0 647.2 L990.5 646.7 L991.2 647.0 L991.8 648.0 L992.1 649.3 M991.6 650.0 L991.6 650.6 L991.5 651.1 L991.2 651.3 L990.9 651.2 L990.7 650.8 L990.5 650.2 L990.5 649.5 L990.7 649.1 L990.9 648.9 L991.2 649.0 L991.5 649.4 L991.6 650.0 M1005.5 646.9 L1005.5 648.3 L1005.2 649.4 L1004.6 649.8 L1004.0 649.5 L1003.4 648.6 L1003.1 647.2 L1003.1 645.9 L1003.4 644.8 L1004.0 644.4 L1004.6 644.7 L1005.2 645.6 L1005.5 646.9 M1005.1 647.7 L1005.1 648.3 L1004.9 648.8 L1004.7 649.0 L1004.4 648.8 L1004.1 648.4 L1004.0 647.8 L1004.0 647.2 L1004.1 646.7 L1004.4 646.5 L1004.7 646.7 L1004.9 647.1 L1005.1 647.7 M997.2 667.2 L1002.0 670.7 L1008.1 664.2 M1027.4 644.7 L1032.0 646.4 L1032.4 651.6 L1028.7 655.1 M1029.1 647.2 L1030.8 650.4 L1029.5 653.3 M969.2 663.1 L969.2 664.5 L968.9 665.5 L968.4 665.9 L967.8 665.6 L967.3 664.7 L967.0 663.4 L967.0 662.0 L967.3 660.9 L967.8 660.5 L968.4 660.8 L968.9 661.8 L969.2 663.1 M1025.6 663.4 L1022.0 668.0 L1016.7 670.0 L1014.3 672.4 M1023.4 656.8 L1027.9 660.4 M1020.9 659.2 L1026.2 662.7 M972.3 665.9 L978.4 670.6 L976.1 675.0 M973.3 668.5 L977.2 672.8 M966.9 649.6 L959.0 647.1 M966.6 646.7 L958.8 643.3 M969.4 644.5 L960.8 640.0 M969.9 641.6 L964.7 637.5 M973.2 639.8 L966.0 633.8 M974.6 637.0 L969.2 631.0 M978.2 635.8 L973.8 629.6 M980.3 633.2 L976.5 626.3 M984.2 632.6 L980.6 624.4 M986.9 630.3 L985.4 624.1 M990.8 630.3 L989.3 621.6 M994.0 628.5 L993.8 620.7 M997.8 629.1 L998.5 621.5 M1001.4 627.8 L1003.0 620.0 M1004.9 629.0 L1007.6 620.2 M1008.7 628.2 L1011.6 622.2 M1011.8 629.9 L1016.5 621.8 M1015.7 629.8 L1020.7 623.1 M1018.1 632.0 L1023.6 626.0 M1021.9 632.5 L1028.3 626.8 M1023.6 635.0 L1031.7 629.1 M1027.1 636.1 L1033.3 632.5 M1028.1 638.8 L1037.3 634.4 M1031.2 640.5 L1039.5 637.5 M1031.3 643.4 L1039.6 641.2 M970.2 659.9 L980.0 650.5 L983.0 652.2 L973.0 661.0 M1012.9 638.9 L1025.9 644.2 L1024.8 646.4 L1013.2 641.3 M1004.0 633.1 L1012.1 643.1 M1006.0 632.9 L1013.3 641.6 M984.8 678.3 L974.2 677.4 L970.7 673.3 L962.6 668.3 L958.6 659.8 L955.1 649.8 L957.7 640.5 L966.8 628.9 L979.2 619.9 L996.4 614.0 L1011.3 613.7 L1025.5 619.4 L1034.1 628.1 L1038.2 639.6 L1036.8 650.2 L1033.1 656.7 L1028.1 664.8 L1019.8 670.3 L1017.3 674.3 L984.8 678.3"/>
</g>
<g opacity="0.995"><text transform="translate(326.5 583) scale(1 1.58)" x="0" y="0" textLength="200" lengthAdjust="spacing" font-family="Liberation Sans, sans-serif" font-weight="bold" font-size="30" fill="#000" stroke="#000" stroke-width="4.4" stroke-linejoin="miter" style="vector-effect:non-scaling-stroke">ALEXANDER</text><text transform="translate(326.5 583) scale(1 1.58)" x="0" y="0" textLength="200" lengthAdjust="spacing" font-family="Liberation Sans, sans-serif" font-weight="bold" font-size="30" fill="#fff" stroke="#fff" stroke-width="1.8" stroke-linejoin="miter" style="vector-effect:non-scaling-stroke">ALEXANDER</text><text transform="translate(473 599.5) scale(1 1.2)" x="0" y="0" textLength="53" lengthAdjust="spacing" font-family="Liberation Sans, sans-serif" font-weight="bold" font-size="11.5" fill="#000" stroke="#000" stroke-width="2.6" style="vector-effect:non-scaling-stroke">DE GROTE</text><text transform="translate(473 599.5) scale(1 1.2)" x="0" y="0" textLength="53" lengthAdjust="spacing" font-family="Liberation Sans, sans-serif" font-weight="bold" font-size="11.5" fill="#fff" stroke="#fff" stroke-width="0.5" style="vector-effect:non-scaling-stroke">DE GROTE</text><text transform="translate(610.0 583) scale(1 1.58)" x="0" y="0" textLength="199.5" lengthAdjust="spacing" font-family="Liberation Sans, sans-serif" font-weight="bold" font-size="30" fill="#000" stroke="#000" stroke-width="4.4" stroke-linejoin="miter" style="vector-effect:non-scaling-stroke">ALEXANDER</text><text transform="translate(610.0 583) scale(1 1.58)" x="0" y="0" textLength="199.5" lengthAdjust="spacing" font-family="Liberation Sans, sans-serif" font-weight="bold" font-size="30" fill="#fff" stroke="#fff" stroke-width="1.8" stroke-linejoin="miter" style="vector-effect:non-scaling-stroke">ALEXANDER</text><text transform="translate(755.5 599.5) scale(1 1.2)" x="0" y="0" textLength="53.5" lengthAdjust="spacing" font-family="Liberation Sans, sans-serif" font-weight="bold" font-size="11.5" fill="#000" stroke="#000" stroke-width="2.6" style="vector-effect:non-scaling-stroke">DE GROTE</text><text transform="translate(755.5 599.5) scale(1 1.2)" x="0" y="0" textLength="53.5" lengthAdjust="spacing" font-family="Liberation Sans, sans-serif" font-weight="bold" font-size="11.5" fill="#fff" stroke="#fff" stroke-width="0.5" style="vector-effect:non-scaling-stroke">DE GROTE</text></g>
</svg><div id="leftstrip" class="abs"><div class="abs blue"></div><div class="abs" style="left:-4px;top:-4px;width:10px;height:22px;border:1px solid #7e97a5;border-radius:0 0 3px 0;background:#3f5364"></div><div class="abs wht"></div>
<div class="abs" style="left:0;top:279px;width:6.5px;height:113px;background:#c2c2c2"></div><svg class="abs" style="left:0;top:106px" width="8" height="12"><path d="M0 5 L3.5 9 L3.5 11 L0 11Z" fill="#555"/></svg></div>
<div id="menubar" class="abs">
<b class="abs" style="left:9px;top:2px;font-size:22px;line-height:24px;color:#e8a935;letter-spacing:-0.5px;transform:scaleX(.88);transform-origin:0 0">Ai</b>
<span style="left:47px">File</span><span style="left:82px">Edit</span><span style="left:119px">Object</span><span style="left:171px">Type</span><span style="left:214px">Select</span><span style="left:263px">Effect</span><span style="left:310px">View</span><span style="left:353px">Window</span><span style="left:414px">Help</span>
<div class="abs" style="left:453px;top:4px;width:1px;height:22px;background:#333"></div>
<div class="abs" style="left:470px;top:8px;width:15px;height:14px;background:#8a8a8a;border:1px solid #a5a5a5;color:#2a2a2a;font-size:8px;line-height:12px;text-align:center;font-weight:bold">Br</div>
<svg class="abs" style="left:508px;top:8px" width="17" height="14"><rect x="0.5" y="0.5" width="16" height="13" fill="#c9c9c9" stroke="#e6e6e6"/><rect x="2" y="2" width="7" height="10" fill="#777"/><rect x="10" y="2" width="5" height="4" fill="#777"/><rect x="10" y="7" width="5" height="5" fill="#777"/></svg>
<svg class="abs" style="left:527px;top:12px" width="9" height="6"><path d="M0 0H9L4.5 5Z" fill="#e4e4e4"/></svg>
</div>
<div id="ctrl" class="abs">
<svg class="abs" style="left:3px;top:6px" width="5" height="22"><path d="M0 0.5H4M0 2.5H4M0 4.5H4M0 6.5H4M0 8.5H4M0 10.5H4M0 12.5H4M0 14.5H4M0 16.5H4M0 18.5H4M0 20.5H4" stroke="#222" stroke-width="1"/></svg>
<span class="lbl" style="left:13px;top:10px">No Selection</span>
<div class="abs" style="left:87px;top:2px;width:1px;height:29px;background:#3a3a3a"></div>
<div class="abs" style="left:95px;top:8px;width:18px;height:18px;background:#fff;border:1px solid #2e2e2e"></div><div class="dd" style="left:113px;top:8px;width:15px;height:18px"></div>
<div class="abs" style="left:136px;top:8px;width:18px;height:18px;background:#000;border:1px solid #fff"><div class="abs" style="left:3px;top:3px;width:10px;height:10px;border:2px solid #fff;background:#222"></div></div><div class="dd" style="left:154px;top:8px;width:15px;height:18px"></div>
<span class="lbl orange" style="left:182px;top:10px">Stroke:</span>
<div class="abs" style="left:220px;top:8px;width:15px;height:18px;background:#555;border:1px solid #2e2e2e"><svg width="13" height="16" class="abs" style="left:0;top:0"><path d="M3 6 L6.5 2 L10 6Z M3 10 L6.5 14 L10 10Z" fill="#e0e0e0"/><path d="M0 8H13" stroke="#333"/></svg></div>
<div class="abs" style="left:235px;top:8px;width:47px;height:18px;background:#a3a3a3;border:1px solid #2e2e2e;color:#111;font-size:10px;line-height:16px;padding-left:4px">1 pt</div><div class="dd" style="left:282px;top:8px;width:15px;height:18px"></div>
<div class="abs" style="left:306px;top:8px;width:91px;height:18px;background:#e2e2e2;border:1px solid #2e2e2e;color:#111;font-size:10px;line-height:16px"><div class="abs" style="left:6px;top:7px;width:36px;height:2px;background:#111"></div><span class="abs" style="left:47px;top:0">Uniform</span></div><div class="dd" style="left:397px;top:8px;width:15px;height:18px"></div>
<div class="abs" style="left:420px;top:8px;width:88px;height:18px;background:#e2e2e2;border:1px solid #2e2e2e;color:#111;font-size:10px;line-height:16px"><div class="abs" style="left:6px;top:5px;width:5px;height:5px;border-radius:3px;background:#111"></div><span class="abs" style="left:21px;top:0">5 pt. Round</span></div><div class="dd" style="left:507px;top:8px;width:15px;height:18px"></div>
<span class="lbl orange" style="left:531px;top:10px">Opacity:</span>
<div class="abs" style="left:575px;top:8px;width:52px;height:18px;background:#a3a3a3;border:1px solid #2e2e2e;color:#111;font-size:10px;line-height:16px;padding-left:3px">100%</div><div class="dd" style="left:626px;top:8px;width:15px;height:18px"></div>
<span class="lbl" style="left:648px;top:10px">Style:</span>
<div class="abs" style="left:681px;top:8px;width:18px;height:18px;background:#e6e6e6;border:1px solid #2e2e2e"></div><div class="dd" style="left:698px;top:8px;width:15px;height:18px"></div>
<div class="abs" style="left:720px;top:2px;width:1px;height:29px;background:#3a3a3a"></div>
<div class="btn" style="left:728px;top:8px;width:112px;height:19px">Document Setup</div>
<div class="btn" style="left:847px;top:8px;width:85px;height:19px">Preferences</div>
<svg class="abs" style="left:943px;top:9px" width="18" height="16"><rect x="1.5" y="3.5" width="7" height="7" fill="none" stroke="#c8c8c8"/><rect x="8.5" y="1.5" width="6" height="6" fill="#777" stroke="#c8c8c8"/><path d="M9 6 L9 14 L11 12 L13 15 L14.5 14 L12.5 11.5 L15 11Z" fill="#d8d8d8"/></svg>
<svg class="abs" style="left:966px;top:14px" width="9" height="6"><path d="M0 0H9L4.5 5Z" fill="#e4e4e4"/></svg>
</div>
<div id="tabbar" class="abs"></div>
<div id="tab" class="abs"><b>Alexander ontwerpen 2 sleutelhangers en 1 muntje.ai* @ 100% (CMYK/Outline)</b>
<svg class="abs" style="left:436px;top:6px" width="8" height="8"><path d="M1 1L7 7M7 1L1 7" stroke="#e0e0e0" stroke-width="1.4"/></svg></div>
<div id="hruler" class="abs"><svg class="abs" style="left:0;top:0" width="1136" height="17" shape-rendering="crispEdges"><path d="M26.5 14V17 M32.5 14V17 M37.5 14V17 M43.5 14V17 M54.5 14V17 M60.5 14V17 M66.5 14V17 M71.5 14V17 M83.5 14V17 M88.5 14V17 M94.5 14V17 M100.5 14V17 M111.5 14V17 M117.5 14V17 M122.5 14V17 M128.5 14V17 M139.5 14V17 M145.5 14V17 M151.5 14V17 M156.5 14V17 M168.5 14V17 M173.5 14V17 M179.5 14V17 M185.5 14V17 M196.5 14V17 M202.5 14V17 M207.5 14V17 M213.5 14V17 M224.5 14V17 M230.5 14V17 M236.5 14V17 M241.5 14V17 M253.5 14V17 M258.5 14V17 M264.5 14V17 M270.5 14V17 M281.5 14V17 M287.5 14V17 M292.5 14V17 M298.5 14V17 M309.5 14V17 M315.5 14V17 M321.5 14V17 M326.5 14V17 M338.5 14V17 M343.5 14V17 M349.5 14V17 M355.5 14V17 M366.5 14V17 M372.5 14V17 M377.5 14V17 M383.5 14V17 M394.5 14V17 M400.5 14V17 M406.5 14V17 M411.5 14V17 M423.5 14V17 M428.5 14V17 M434.5 14V17 M440.5 14V17 M451.5 14V17 M457.5 14V17 M462.5 14V17 M468.5 14V17 M479.5 14V17 M485.5 14V17 M491.5 14V17 M496.5 14V17 M508.5 14V17 M513.5 14V17 M519.5 14V17 M525.5 14V17 M536.5 14V17 M542.5 14V17 M547.5 14V17 M553.5 14V17 M564.5 14V17 M570.5 14V17 M576.5 14V17 M581.5 14V17 M593.5 14V17 M598.5 14V17 M604.5 14V17 M610.5 14V17 M621.5 14V17 M627.5 14V17 M633.5 14V17 M638.5 14V17 M650.5 14V17 M655.5 14V17 M661.5 14V17 M667.5 14V17 M678.5 14V17 M684.5 14V17 M689.5 14V17 M695.5 14V17 M706.5 14V17 M712.5 14V17 M718.5 14V17 M723.5 14V17 M735.5 14V17 M740.5 14V17 M746.5 14V17 M752.5 14V17 M763.5 14V17 M769.5 14V17 M774.5 14V17 M780.5 14V17 M791.5 14V17 M797.5 14V17 M803.5 14V17 M808.5 14V17 M820.5 14V17 M825.5 14V17 M831.5 14V17 M837.5 14V17 M848.5 14V17 M854.5 14V17 M859.5 14V17 M865.5 14V17 M876.5 14V17 M882.5 14V17 M888.5 14V17 M893.5 14V17 M905.5 14V17 M910.5 14V17 M916.5 14V17 M922.5 14V17 M933.5 14V17 M939.5 14V17 M944.5 14V17 M950.5 14V17 M961.5 14V17 M967.5 14V17 M973.5 14V17 M978.5 14V17 M990.5 14V17 M995.5 14V17 M1001.5 14V17 M1007.5 14V17 M1018.5 14V17 M1024.5 14V17 M1029.5 14V17 M1035.5 14V17 M1046.5 14V17 M1052.5 14V17 M1058.5 14V17 M1063.5 14V17 M1075.5 14V17 M1080.5 14V17 M1086.5 14V17 M1092.5 14V17 M1103.5 14V17 M1109.5 14V17 M1114.5 14V17 M1120.5 14V17 M1131.5 14V17" stroke="#787878" stroke-width="1" fill="none"/><path d="M20.5 0V17 M49.5 0V17 M77.5 0V17 M105.5 0V17 M134.5 0V17 M162.5 0V17 M190.5 0V17 M219.5 0V17 M247.5 0V17 M275.5 0V17 M304.5 0V17 M332.5 0V17 M360.5 0V17 M389.5 0V17 M417.5 0V17 M445.5 0V17 M474.5 0V17 M502.5 0V17 M530.5 0V17 M559.5 0V17 M587.5 0V17 M615.5 0V17 M644.5 0V17 M672.5 0V17 M701.5 0V17 M729.5 0V17 M757.5 0V17 M786.5 0V17 M814.5 0V17 M842.5 0V17 M871.5 0V17 M899.5 0V17 M927.5 0V17 M956.5 0V17 M984.5 0V17 M1012.5 0V17 M1041.5 0V17 M1069.5 0V17 M1097.5 0V17 M1126.5 0V17" stroke="#6c6c6c" stroke-width="1" fill="none"/></svg><svg class="abs" style="left:0;top:0" width="1136" height="17"><g font-family="Liberation Sans, sans-serif" font-size="9" fill="#dcdcdc"><text x="23.0" y="11.5" >8</text><text x="52.0" y="11.5" >7</text><text x="80.0" y="11.5" >6</text><text x="108.0" y="11.5" >5</text><text x="137.0" y="11.5" >4</text><text x="165.0" y="11.5" >3</text><text x="193.0" y="11.5" >2</text><text x="222.0" y="11.5" >1</text><text x="250.0" y="11.5" >0</text><text x="278.0" y="11.5" >1</text><text x="307.0" y="11.5" >2</text><text x="335.0" y="11.5" >3</text><text x="363.0" y="11.5" >4</text><text x="392.0" y="11.5" >5</text><text x="420.0" y="11.5" >6</text><text x="448.0" y="11.5" >7</text><text x="477.0" y="11.5" >8</text><text x="505.0" y="11.5" >9</text><text x="533.0" y="11.5" >10</text><text x="562.0" y="11.5" >11</text><text x="590.0" y="11.5" >12</text><text x="618.0" y="11.5" >13</text><text x="647.0" y="11.5" >14</text><text x="675.0" y="11.5" >15</text><text x="704.0" y="11.5" >16</text><text x="732.0" y="11.5" >17</text><text x="760.0" y="11.5" >18</text><text x="789.0" y="11.5" >19</text><text x="817.0" y="11.5" >20</text><text x="845.0" y="11.5" >21</text><text x="874.0" y="11.5" >22</text><text x="902.0" y="11.5" >23</text><text x="930.0" y="11.5" >24</text><text x="959.0" y="11.5" >25</text><text x="987.0" y="11.5" >26</text><text x="1015.0" y="11.5" >27</text><text x="1044.0" y="11.5" >28</text><text x="1072.0" y="11.5" >29</text><text x="1100.0" y="11.5" >30</text><text x="1129.0" y="11.5" >31</text></g></svg></div><div id="vruler" class="abs"><svg class="abs" style="left:0;top:0" width="17" height="707" shape-rendering="crispEdges"><path d="M14 21.5H17 M14 26.5H17 M14 32.5H17 M14 43.5H17 M14 49.5H17 M14 55.5H17 M14 60.5H17 M14 72.5H17 M14 77.5H17 M14 83.5H17 M14 89.5H17 M14 100.5H17 M14 106.5H17 M14 111.5H17 M14 117.5H17 M14 128.5H17 M14 134.5H17 M14 140.5H17 M14 145.5H17 M14 157.5H17 M14 162.5H17 M14 168.5H17 M14 174.5H17 M14 185.5H17 M14 191.5H17 M14 196.5H17 M14 202.5H17 M14 213.5H17 M14 219.5H17 M14 225.5H17 M14 230.5H17 M14 242.5H17 M14 247.5H17 M14 253.5H17 M14 259.5H17 M14 270.5H17 M14 276.5H17 M14 281.5H17 M14 287.5H17 M14 298.5H17 M14 304.5H17 M14 310.5H17 M14 315.5H17 M14 327.5H17 M14 332.5H17 M14 338.5H17 M14 344.5H17 M14 355.5H17 M14 361.5H17 M14 366.5H17 M14 372.5H17 M14 383.5H17 M14 389.5H17 M14 395.5H17 M14 400.5H17 M14 412.5H17 M14 417.5H17 M14 423.5H17 M14 429.5H17 M14 440.5H17 M14 446.5H17 M14 452.5H17 M14 457.5H17 M14 469.5H17 M14 474.5H17 M14 480.5H17 M14 486.5H17 M14 497.5H17 M14 503.5H17 M14 508.5H17 M14 514.5H17 M14 525.5H17 M14 531.5H17 M14 537.5H17 M14 542.5H17 M14 554.5H17 M14 559.5H17 M14 565.5H17 M14 571.5H17 M14 582.5H17 M14 588.5H17 M14 593.5H17 M14 599.5H17 M14 610.5H17 M14 616.5H17 M14 622.5H17 M14 627.5H17 M14 639.5H17 M14 644.5H17 M14 650.5H17 M14 656.5H17 M14 667.5H17 M14 673.5H17 M14 678.5H17 M14 684.5H17 M14 695.5H17 M14 701.5H17 M14 707.5H17" stroke="#787878" stroke-width="1" fill="none"/><path d="M0 38.5H17 M0 66.5H17 M0 94.5H17 M0 123.5H17 M0 151.5H17 M0 179.5H17 M0 208.5H17 M0 236.5H17 M0 264.5H17 M0 293.5H17 M0 321.5H17 M0 349.5H17 M0 378.5H17 M0 406.5H17 M0 434.5H17 M0 463.5H17 M0 491.5H17 M0 520.5H17 M0 548.5H17 M0 576.5H17 M0 605.5H17 M0 633.5H17 M0 661.5H17 M0 690.5H17" stroke="#6c6c6c" stroke-width="1" fill="none"/></svg><svg class="abs" style="left:0;top:0" width="17" height="707"><g font-family="Liberation Sans, sans-serif" font-size="9" fill="#dcdcdc"><text x="3" y="32.5">1</text><text x="3" y="60.5">0</text><text x="3" y="88.5">1</text><text x="3" y="117.5">2</text><text x="3" y="145.5">3</text><text x="3" y="173.5">4</text><text x="3" y="202.5">5</text><text x="3" y="230.5">6</text><text x="3" y="258.5">7</text><text x="3" y="287.5">8</text><text x="3" y="315.5">9</text><text x="3" y="332.5">1</text><text x="3" y="343.5">0</text><text x="3" y="361.5">1</text><text x="3" y="372.5">1</text><text x="3" y="389.5">1</text><text x="3" y="400.5">2</text><text x="3" y="417.5">1</text><text x="3" y="428.5">3</text><text x="3" y="446.5">1</text><text x="3" y="457.5">4</text><text x="3" y="474.5">1</text><text x="3" y="485.5">5</text><text x="3" y="503.5">1</text><text x="3" y="514.5">6</text><text x="3" y="531.5">1</text><text x="3" y="542.5">7</text><text x="3" y="559.5">1</text><text x="3" y="570.5">8</text><text x="3" y="588.5">1</text><text x="3" y="599.5">9</text><text x="3" y="616.5">2</text><text x="3" y="627.5">0</text><text x="3" y="644.5">2</text><text x="3" y="655.5">1</text><text x="3" y="673.5">2</text><text x="3" y="684.5">2</text></g></svg><div class="abs" style="left:0;top:0;width:17px;height:17px;background:#2c2c2c"><div class="abs" style="left:6px;top:6px;width:11px;height:11px;background:#fff"></div></div></div><div class="panel" style="left:30px;top:84px;width:72px;height:516px;box-shadow:0 0 2px rgba(0,0,0,.5)">
<svg class="abs" style="left:0;top:0" width="72" height="516" viewBox="30 84 72 516">
<defs><linearGradient id="gr1" x1="0" x2="1"><stop offset="0" stop-color="#3c3c3c"/><stop offset="1" stop-color="#d8d8d8"/></linearGradient>
<linearGradient id="gr2" x1="0" x2="1"><stop offset="0" stop-color="#fff"/><stop offset="1" stop-color="#222"/></linearGradient></defs>
<rect x="30" y="84" width="72" height="13" fill="#2b2b2b"/>
<path d="M76.5 88 L73 90.7 L76.5 93.4Z M80.5 88 L77 90.7 L80.5 93.4Z" fill="#d0d0d0"/>
<path d="M90.5 88 L95.5 93.4 M95.5 88 L90.5 93.4" stroke="#d8d8d8" stroke-width="1.5"/>
<path d="M56.5 101V104.5M58.5 101V104.5M60.5 101V104.5M62.5 101V104.5M64.5 101V104.5M66.5 101V104.5M68.5 101V104.5M70.5 101V104.5M72.5 101V104.5M74.5 101V104.5" stroke="#1d1d1d" stroke-width="1"/>
<g stroke="#3a3a3a" stroke-width="1"><path d="M38 162.5H96M38 260.5H96M38 333.5H96M38 383.5H96M38 409.5H96M38 459.5H96"/></g>
<!-- selection -->
<rect x="37" y="114" width="28" height="21.5" fill="#2e2e2e"/>
<path d="M46.5 116.5 V131.5 L50 128 L52.5 133.5 L55 132.3 L52.5 127 H57.5Z" fill="#1c1c1c" stroke="#d6d6d6" stroke-width="1"/>
<path d="M77.5 116.5 V131.5 L81 128 L83.5 133.5 L86 132.3 L83.5 127 H88.5Z" fill="#c6c6c6"/>
<g fill="#dcdcdc"><path d="M94 132.5v3h-3z"/><path d="M63 181.5v3h-3z"/><path d="M94 181.5v3h-3z"/><path d="M63 205.5v3h-3z"/><path d="M94 205.5v3h-3z"/><path d="M94 229.5v3h-3z"/><path d="M94 253.5v3h-3z"/><path d="M63 278.5v3h-3z"/><path d="M94 278.5v3h-3z"/><path d="M63 303.5v3h-3z"/><path d="M63 328.5v3h-3z"/><path d="M94 328.5v3h-3z"/><path d="M63 377.5v3h-3z"/><path d="M63 403.5v3h-3z"/><path d="M94 403.5v3h-3z"/><path d="M94 430.5v3h-3z"/><path d="M63 454.5v3h-3z"/></g>
<!-- magic wand -->
<g stroke="#c6c6c6" stroke-width="1.4" fill="none"><path d="M49 141v12M43 147h12M44.8 142.8l8.4 8.4M53.2 142.8l-8.4 8.4"/><path d="M51.5 149.5L58 156" stroke-width="2.4"/></g>
<!-- lasso -->
<g fill="none" stroke="#c6c6c6" stroke-width="1.4"><ellipse cx="81" cy="147" rx="8" ry="5.2"/><path d="M75.5 151.5c1.5 1.5 3 2.5 1.5 5"/></g>
<path d="M80.5 142.5V157l9-7.5z" fill="#c6c6c6"/>
<!-- pen -->
<path d="M43.5 182.5 L45.8 173 L52 168.5 L57.5 174 L53 180.2Z" fill="#c6c6c6"/><path d="M44 182 L50 176" stroke="#333" stroke-width="1"/><circle cx="50.6" cy="175.4" r="1.5" fill="#333"/>
<path d="M53.4 166 L60.2 172.8 L58 175 L51.2 168.2Z" fill="#dedede"/>
<!-- T -->
<text x="81.2" y="181.2" text-anchor="middle" font-family="Liberation Serif, serif" font-size="21" fill="#c6c6c6">T</text>
<!-- line, rect -->
<path d="M43.8 206 L57 192" stroke="#c6c6c6" stroke-width="1.6"/>
<rect x="74.5" y="193" width="14" height="11.5" fill="#7a7a7a" stroke="#c6c6c6"/>
<!-- brush -->
<path d="M59.2 215.6 L60.6 217 L52 226.5 L50 224.5Z" fill="#c6c6c6"/><path d="M49.8 225 L51.6 227 C50 231 46 231.5 42.5 230.5 C45.5 229.5 46.5 227 49.8 225Z" fill="#c6c6c6"/>
<!-- pencil -->
<path d="M84 215.5 L88 219.5 L79 229.5 L75 225.5Z" fill="#8a8a8a" stroke="#c6c6c6" stroke-width=".8"/><path d="M84 215.5 L88 219.5 L86 221.6 L82 217.6Z" fill="#dcdcdc"/><path d="M75 225.5 L79 229.5 L73.5 232Z" fill="#dcdcdc"/>
<!-- blob brush -->
<path d="M43 244h11v4h5v6H47l-4-3z" fill="#8c8c8c" stroke="#c6c6c6"/><path d="M60 239l1 1-7 7-2-1z" fill="#dcdcdc"/><ellipse cx="51" cy="248" rx="4" ry="2" fill="#333"/>
<!-- eraser -->
<path d="M79 240.5 L89 240.5 L83.5 248 L73.5 248Z" fill="#dcdcdc"/><path d="M73.5 248 H83.5 V254 H73.5Z" fill="#9a9a9a" stroke="#c6c6c6" stroke-width=".8"/><path d="M83.5 248 L89 240.5 V246.5 L83.5 254Z" fill="#b4b4b4"/>
<!-- rotate -->
<circle cx="51" cy="273" r="6.3" fill="none" stroke="#c6c6c6" stroke-width="1.5" stroke-dasharray="2.4 1.8"/><path d="M51.5 266.7 A6.3 6.3 0 0 1 57.3 273" fill="none" stroke="#c6c6c6" stroke-width="1.5"/><path d="M46.5 268.2 L51.5 264.5 V269.5Z" fill="#c6c6c6"/>
<!-- scale -->
<rect x="72.5" y="272.5" width="8" height="7.5" fill="none" stroke="#c6c6c6"/><rect x="76.5" y="266.5" width="12.5" height="10" fill="none" stroke="#c6c6c6"/><path d="M82 274L87 268.5M84 268.5h3v3" stroke="#c6c6c6" fill="none"/>
<!-- warp -->
<path d="M43.5 302 L47 296 L45 291.5 L48.5 290 L51 294 C54 297 56 292 60 296 L59.5 301 C56 297 54 303 50 300Z" fill="#b8b8b8"/><path d="M43.5 302.5L53.5 291.5" stroke="#e8e8e8" stroke-width="1"/><circle cx="43.5" cy="302.5" r="1.4" fill="#444" stroke="#e8e8e8"/><circle cx="53.5" cy="291.5" r="1.4" fill="#444" stroke="#e8e8e8"/><circle cx="47.8" cy="297.8" r="1.9" fill="#444" stroke="#fff"/>
<!-- free transform -->
<path d="M73 290 V303 L81 297Z" fill="#c6c6c6"/><rect x="78.5" y="292.5" width="10" height="10" fill="none" stroke="#c6c6c6" stroke-dasharray="2 1.4"/><g fill="#dcdcdc"><rect x="77.5" y="291.5" width="2.4" height="2.4"/><rect x="87.2" y="291.5" width="2.4" height="2.4"/><rect x="77.5" y="301.2" width="2.4" height="2.4"/><rect x="87.2" y="301.2" width="2.4" height="2.4"/></g>
<!-- shape builder -->
<circle cx="48" cy="320" r="5.6" fill="#8a8a8a" stroke="#c6c6c6"/><circle cx="53" cy="318" r="5" fill="#7a7a7a" stroke="#b4b4b4"/><path d="M44 320h9" stroke="#fff" stroke-dasharray="1.2 1"/><path d="M54 319.5 V330.5 L62 325.5Z" fill="#c6c6c6"/>
<!-- perspective -->
<path d="M73 314 H78 V318 H83 V322 H87 V326 H90 V328.5 H73Z" fill="#bdbdbd"/><path d="M77.5 316v12.5M82 320v8.5M86 324v4.5M73 320h9M73 324h13" stroke="#484848" stroke-width="1.1"/><path d="M82 322v4h6" stroke="#484848" fill="none"/>
<!-- mesh -->
<rect x="43.5" y="341.5" width="15.5" height="11.5" fill="none" stroke="#c6c6c6" stroke-width="1.2"/><path d="M43.5 345c5-2 9 3 15.5 0M43.5 349.5c6-2 9 2 15.5-.5M48.5 341.5c2 4-1 8 1 11.500M54 341.5c-2 4 2 8-0.500 11.500" fill="none" stroke="#c6c6c6"/>
<!-- gradient -->
<rect x="73.500" y="341.500" width="15.500" height="11.500" fill="url(#gr1)" stroke="#c6c6c6"/>
<!-- eyedropper -->
<path d="M57 362.500 c1.500-1 3.500 1 2.500 2.500 l-3 3 1 1 -1.200 1.200 -1-1 -7.500 7.500 -3 1.500 -.8-.8 1.500-3 7.500-7.500 -1-1 1.200-1.200 1 1z" fill="#c6c6c6"/>
<!-- blend -->
<rect x="72.500" y="363.500" width="8" height="8" fill="#8a8a8a" stroke="#b4b4b4"/><rect x="76.500" y="366.500" width="8" height="8" rx="2" fill="#7a7a7a" stroke="#c6c6c6"/><circle cx="85.500" cy="373.500" r="4.300" fill="#7a7a7a" stroke="#c6c6c6" stroke-width="1.2"/>
<!-- spray -->
<rect x="49.500" y="393.500" width="9.500" height="11" fill="#6a6a6a" stroke="#c6c6c6" stroke-width="1.200"/><rect x="52.500" y="389.500" width="4" height="3.500" fill="#c6c6c6"/><circle cx="54.300" cy="399.500" r="2.600" fill="#333" stroke="#e4e4e4" stroke-width="1.400"/><g fill="#c6c6c6"><rect x="42" y="389" width="1.300" height="1.300"/><rect x="44.500" y="388" width="1.300" height="1.300"/><rect x="47" y="389" width="1.300" height="1.300"/><rect x="43" y="391.500" width="1.300" height="1.300"/><rect x="46" y="391.500" width="1.300" height="1.300"/><rect x="48.500" y="391" width="1.300" height="1.300"/><rect x="44.500" y="394" width="1.300" height="1.300"/></g>
<!-- graph -->
<path d="M73.500 389.500V404H90" fill="none" stroke="#c6c6c6" stroke-width="1.300"/><rect x="75.500" y="396.500" width="3" height="7" fill="#7a7a7a" stroke="#c6c6c6"/><rect x="81" y="391.500" width="3" height="12" fill="#7a7a7a" stroke="#c6c6c6"/><rect x="86.500" y="394.500" width="3" height="9" fill="#7a7a7a" stroke="#c6c6c6"/>
<!-- artboard -->
<rect x="45.500" y="417.500" width="11" height="10" fill="#7a7a7a" stroke="#c6c6c6"/><path d="M45.500 413v3M56.500 413v3M45.500 429v3.500M56.500 429v3.500M41 417.500h3M41 427.500h3M58 417.500h3.500M58 427.500h3.500" stroke="#dcdcdc" stroke-width="1.200"/>
<!-- slice -->
<path d="M91 416 L84 416.500 L79 421 L82.500 423Z" fill="#8a8a8a" stroke="#b4b4b4" stroke-width=".6"/><path d="M79 421 L82.500 423.500 L73 431 Z" fill="#d6d6d6"/>
<!-- hand -->
<path d="M46 455 L43 448 C42 446 44 445.500 45 447 L46.500 449.500 L46 441.500 C46 440 48 440 48.200 441.500 L49 447 L49.500 440 C49.700 438.500 51.500 438.500 51.600 440 L51.800 447 L53.300 441 C53.700 439.500 55.500 440 55.300 441.500 L54.500 448 L57 444.500 C58 443.500 59.500 444.500 58.500 446 L55.500 452 L55 455Z" fill="#c6c6c6"/>
<!-- zoom -->
<circle cx="80" cy="445" r="5.200" fill="#7a7a7a" stroke="#c6c6c6" stroke-width="1.500"/><path d="M83.800 449 L89.500 455" stroke="#c6c6c6" stroke-width="3" stroke-linecap="round"/>
<!-- fill/stroke -->
<rect x="54.500" y="481.500" width="35" height="34.500" fill="#000" stroke="#fff"/><rect x="63.500" y="490.500" width="17.500" height="17" fill="#484848" stroke="#fff" stroke-width="1.200"/>
<rect x="36" y="464" width="35" height="34.500" fill="#fff" stroke="#484848" stroke-width=".5"/>
<path d="M81.500 467.500 h4.500 v5" fill="none" stroke="#d6d6d6" stroke-width="1.300"/><path d="M81 465 v5 l-2.800-2.500z M83.500 471.500 h5 l-2.500 2.800z" fill="#d6d6d6"/>
<rect x="40.500" y="509.500" width="7" height="7" fill="#000" stroke="#e0e0e0"/><rect x="37.500" y="506.500" width="7" height="7" fill="#e8e8e8" stroke="#222"/>
<!-- color mode buttons -->
<rect x="37" y="524" width="20" height="19" fill="#2e2e2e"/><rect x="57.500" y="524.500" width="20" height="18" fill="#565656" stroke="#3a3a3a"/><rect x="77.500" y="524.500" width="20" height="18" fill="#565656" stroke="#3a3a3a"/>
<rect x="41" y="527.500" width="12.500" height="12.500" fill="#fff" stroke="#111"/><rect x="61.500" y="527.500" width="12.500" height="12.500" fill="url(#gr2)" stroke="#111"/><rect x="81.500" y="527.500" width="12.500" height="12.500" fill="#fff" stroke="#111"/><path d="M82 540L94 528" stroke="#d8141c" stroke-width="2"/>
<!-- draw modes -->
<rect x="37" y="549" width="20" height="18" fill="#2e2e2e"/><rect x="57.500" y="549.500" width="20" height="17" fill="#5e5e5e" stroke="#3a3a3a"/><rect x="77.500" y="549.500" width="20" height="17" fill="#565656" stroke="#3a3a3a"/>
<circle cx="46" cy="556.500" r="3.800" fill="#8a8a8a" stroke="#c6c6c6"/><rect x="47.500" y="557.500" width="6" height="6" fill="#c6c6c6"/>
<rect x="66.500" y="557.500" width="6" height="6" fill="#aaa"/><circle cx="65.500" cy="556.500" r="4" fill="#8a8a8a" stroke="#c6c6c6"/>
<circle cx="86.500" cy="557.500" r="3.600" fill="none" stroke="#6e6e6e" stroke-width="1.600"/>
<!-- screen mode -->
<rect x="54.500" y="579.500" width="13.500" height="11" fill="#6a6a6a" stroke="#c6c6c6" stroke-width="1.200"/><rect x="60.500" y="575.500" width="14" height="11" fill="#7a7a7a" stroke="#c6c6c6" stroke-width="1.200"/>
</svg></div>
<div class="panel" style="left:70px;top:699px;width:232px;height:93px;border-radius:4px 4px 0 0;overflow:hidden;box-shadow:0 0 2px rgba(0,0,0,.5)">
<div class="phead" style="left:0;top:0;width:232px;height:14px"></div>
<div class="abs" style="left:0;top:14px;width:232px;height:17px;background:#333"></div>
<div class="abs" style="left:0;top:14px;width:35px;height:17px;background:#3b3b3b"></div>
<div class="abs" style="left:35px;top:14px;width:64px;height:18px;background:#484848"></div>
<b class="abs" style="left:8px;top:16px;font-size:11px;color:#8c8c8c">Info</b>
<b class="abs" style="left:42px;top:16px;font-size:11px;color:#ececec;letter-spacing:-0.45px">Pathfinder</b>
<svg class="abs" style="left:0;top:0" width="232" height="93" viewBox="70 699 232 93">
<path d="M276.500 703.500 L273 706.500 L276.500 709.500Z M280.500 703.500 L277 706.500 L280.500 709.500Z" fill="#d0d0d0"/>
<path d="M290 703.800 L295 709.200 M295 703.800 L290 709.200" stroke="#d8d8d8" stroke-width="1.500"/>
<path d="M283 719.500h5l-2.500 3z" fill="#d0d0d0"/><path d="M289 718.500h8M289 720.500h8M289 722.500h8M289 724.500h8" stroke="#d0d0d0"/>
<!-- shape mode icons -->
<rect x="82.500" y="760.500" width="8" height="8" fill="#9a9a9a" stroke="#d0d0d0"/><rect x="86.500" y="764.500" width="8" height="8" fill="#9a9a9a" stroke="#d0d0d0"/>
<rect x="120.500" y="764.500" width="9" height="8" fill="#505050" stroke="#6a6a6a"/><rect x="116.500" y="760.500" width="9" height="8" fill="#484848" stroke="#d0d0d0"/><rect x="120.500" y="764.500" width="5" height="4" fill="#484848" stroke="#9a9a9a"/>
<rect x="153.500" y="760.500" width="8" height="8" fill="none" stroke="#d0d0d0"/><rect x="157.500" y="764.500" width="8" height="8" fill="none" stroke="#d0d0d0"/><rect x="157.500" y="764.500" width="4" height="4" fill="#888" stroke="#d0d0d0"/>
<rect x="189.500" y="760.500" width="8" height="8" fill="#8a8a8a" stroke="#d0d0d0"/><rect x="193.500" y="764.500" width="8" height="8" fill="#8a8a8a" stroke="#d0d0d0"/><rect x="193.500" y="764.500" width="4" height="4" fill="#484848" stroke="#d0d0d0"/>
</svg>
<span class="lbl" style="left:6px;top:37px;font-size:10px">Shape Modes:</span>
<div class="abs" style="left:150px;top:59px;width:75px;height:18px;border:1px solid #3a3a3a;background:#505050;color:#7e7e7e;font-size:10px;line-height:16px;text-align:center">Expand</div>
<span class="lbl" style="left:6px;top:85px;font-size:10px">Pathfinders:</span>
</div>
<div class="panel" style="left:1095px;top:92px;width:49px;height:460px;overflow:hidden;box-shadow:0 0 2px rgba(0,0,0,.5)">
<div class="phead" style="left:0;top:0;width:49px;height:13px"></div>
<div class="abs" style="left:0;top:13px;width:49px;height:17px;background:#3e3e3e"></div>
<b class="abs" style="left:7px;top:15px;font-size:10.500px;color:#9a9a9a;white-space:nowrap">Transparency</b>
<div class="abs" style="left:0;top:196px;width:49px;height:4px;background:#2e2e2e"></div>
<div class="abs" style="left:0;top:200px;width:49px;height:17px;background:#3a3a3a"></div>
<div class="abs" style="left:33px;top:200px;width:1px;height:17px;background:#2e2e2e"></div>
<b class="abs" style="left:7px;top:202px;font-size:9.5px;color:#9a9a9a;white-space:nowrap;width:27px;overflow:hidden">Chara</b>
<b class="abs" style="left:38px;top:202px;font-size:10.500px;color:#b0b0b0;white-space:nowrap">Pa</b>
<div class="abs" style="left:0;top:452px;width:49px;height:1px;background:#2a2a2a"></div>
<svg class="abs" style="left:0;top:0" width="49" height="460" viewBox="1095 92 49 460">
<defs><linearGradient id="rg1" x1="0" x2="1"><stop offset="0" stop-color="#fff"/><stop offset="1" stop-color="#cfcfcf"/></linearGradient>
<linearGradient id="rg2" x1="0" x2="1"><stop offset="0" stop-color="#f4f4f4"/><stop offset="1" stop-color="#3a3a3a"/></linearGradient></defs>
<rect x="1104.500" y="133.500" width="7" height="7" fill="#000" stroke="#e0e0e0"/><rect x="1101.500" y="130.500" width="7" height="7" fill="#e8e8e8" stroke="#222"/>
<path d="M1122.500 132 h4.500 v5" fill="none" stroke="#d6d6d6" stroke-width="1.300"/><path d="M1122.500 129.500 v5 l-2.800-2.500z M1124.500 136 h5 l-2.500 2.800z" fill="#d6d6d6"/>
<rect x="1111" y="157" width="18" height="18" fill="#000" stroke="#fff"/><rect x="1115.500" y="161.500" width="9" height="9" fill="#484848" stroke="#fff"/>
<rect x="1101" y="147" width="18.500" height="18.500" fill="#fff"/>
<rect x="1101" y="237" width="12.500" height="12" fill="#fff"/><path d="M1101.500 248.500L1113 237.500" stroke="#d8141c" stroke-width="1.600"/><rect x="1113.500" y="237" width="13" height="12" fill="#000"/><rect x="1126.500" y="237" width="12.500" height="12" fill="#fff"/>
<rect x="1102" y="261" width="42" height="21" fill="url(#rg1)"/>
<rect x="1102" y="317" width="27.500" height="28" fill="url(#rg2)" stroke="#333" stroke-width=".6"/>
<path d="M1134.500 328.500h6l-3 3.500z" fill="#e4e4e4"/>
<rect x="1112" y="363" width="18" height="17.500" fill="#000" stroke="#fff"/><rect x="1116.500" y="367.500" width="9" height="8.500" fill="#484848" stroke="#fff"/>
<rect x="1102" y="353" width="18.500" height="18.500" fill="#fff"/>
<g stroke="#6a6a6a" fill="none"><rect x="1109.500" y="393.500" width="6" height="4"/><path d="M1116 395.500h3"/><rect x="1115.500" y="401.500" width="6" height="4"/><path d="M1111 403.500h4"/></g>
<rect x="1105.500" y="429" width="39" height="36" fill="url(#rg1)"/>
<rect x="1141.500" y="525" width="3" height="7" fill="#9a9088"/>
</svg></div>
</body></html>
